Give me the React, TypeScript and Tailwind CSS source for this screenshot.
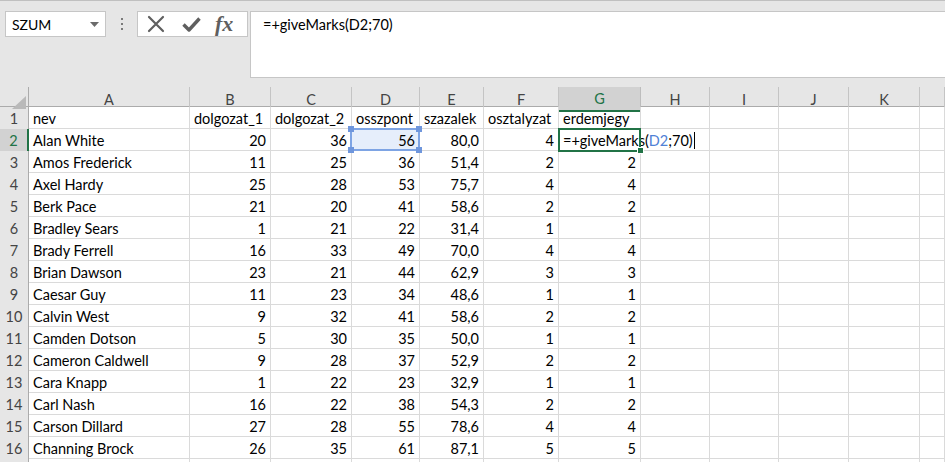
import React from 'react';

const cols = ['A', 'B', 'C', 'D', 'E', 'F', 'G', 'H', 'I', 'J', 'K', ''];

const data: (string | number)[][] = [
  ['nev', 'dolgozat_1', 'dolgozat_2', 'osszpont', 'szazalek', 'osztalyzat', 'erdemjegy'],
  ['Alan White', 20, 36, 56, '80,0', 4, ''],
  ['Amos Frederick', 11, 25, 36, '51,4', 2, 2],
  ['Axel Hardy', 25, 28, 53, '75,7', 4, 4],
  ['Berk Pace', 21, 20, 41, '58,6', 2, 2],
  ['Bradley Sears', 1, 21, 22, '31,4', 1, 1],
  ['Brady Ferrell', 16, 33, 49, '70,0', 4, 4],
  ['Brian Dawson', 23, 21, 44, '62,9', 3, 3],
  ['Caesar Guy', 11, 23, 34, '48,6', 1, 1],
  ['Calvin West', 9, 32, 41, '58,6', 2, 2],
  ['Camden Dotson', 5, 30, 35, '50,0', 1, 1],
  ['Cameron Caldwell', 9, 28, 37, '52,9', 2, 2],
  ['Cara Knapp', 1, 22, 23, '32,9', 1, 1],
  ['Carl Nash', 16, 22, 38, '54,3', 2, 2],
  ['Carson Dillard', 27, 28, 55, '78,6', 4, 4],
  ['Channing Brock', 26, 35, 61, '87,1', 5, 5],
  ['', '', '', '', '', '', ''],
];

const gridCols =
  'grid grid-cols-[29px_161px_81px_81px_68px_64px_75px_82px_69px_69px_70px_71px_1fr]';

function FormulaCell() {
  return (
    <div className="relative z-10 h-[22px] border-b border-[#dadada] pl-[4px] whitespace-nowrap leading-[23px]">
      <span>=+giveMarks(</span>
      <span className="text-[#4f81d6]">D2</span>
      <span>;70)</span>
      <span className="ml-[1px] inline-block h-[17px] w-px translate-y-[3px] bg-black" />
      {/* active cell frame */}
      <div className="pointer-events-none absolute -top-[1px] -left-[1px] h-[24px] w-[83px] border-2 border-[#217346]" />
      <div className="absolute -right-[3px] -bottom-[4px] h-[7px] w-[7px] border border-white bg-[#217346]" />
    </div>
  );
}

function RefCell({ value }: { value: number }) {
  return (
    <div className="relative h-[22px] border-r border-b border-[#dadada] bg-[#e6eefb] pr-[4px] text-right leading-[23px]">
      {value}
      <div className="pointer-events-none absolute -top-[1px] -left-[2px] h-[23px] w-[70px] border-2 border-[#7ea4e4]" />
      <div className="absolute -top-[3px] -left-[4px] h-[6px] w-[6px] bg-[#6f96dc]" />
      <div className="absolute -top-[3px] -right-[3px] h-[6px] w-[6px] bg-[#6f96dc]" />
      <div className="absolute -bottom-[3px] -left-[4px] h-[6px] w-[6px] bg-[#6f96dc]" />
      <div className="absolute -right-[3px] -bottom-[3px] h-[6px] w-[6px] bg-[#6f96dc]" />
    </div>
  );
}

export default function App() {
  return (
    <div className="h-[462px] w-[945px] overflow-hidden bg-[#e6e6e6] font-[Lato,sans-serif] text-[14.5px] text-black">
      {/* Formula bar area */}
      <div className="flex h-[77px] items-start border-t border-[#c0c0c0] pt-[10px]">
        <div className="ml-[5px] flex h-[26px] w-[101px] items-center justify-between border border-[#c6c6c6] bg-white pr-[6px] pl-[6px] text-[14px]">
          <span>SZUM</span>
          <svg width="9" height="5" viewBox="0 0 9 5">
            <path d="M0 0h9L4.5 5z" fill="#6b6b6b" />
          </svg>
        </div>
        <div className="ml-[14px] flex h-[26px] w-[4px] flex-col items-center justify-center gap-[3px]">
          <div className="h-[2px] w-[2px] bg-[#7a7a7a]" />
          <div className="h-[2px] w-[2px] bg-[#7a7a7a]" />
          <div className="h-[2px] w-[2px] bg-[#7a7a7a]" />
        </div>
        <div className="ml-[13px] flex h-[26px] w-[111px] items-center border border-[#c6c6c6] bg-white">
          <svg className="ml-[9px]" width="18" height="18" viewBox="0 0 18 18">
            <path d="M2 2L16 16M16 2L2 16" stroke="#5f5f5f" strokeWidth="2.2" strokeLinecap="round" />
          </svg>
          <svg className="ml-[17px]" width="19" height="16" viewBox="0 0 19 16">
            <path d="M1.5 8.5L7 14L17.5 2.5" stroke="#5f5f5f" strokeWidth="3.4" fill="none" strokeLinejoin="round" />
          </svg>
          <span className="ml-[14px] font-['Liberation_Serif',serif] text-[22px] leading-none font-semibold text-[#5f5f5f] italic">
            fx
          </span>
        </div>
        <div className="ml-[2px] h-[67px] flex-1 border-t border-b border-l border-[#c6c6c6] bg-white pt-[2px] pl-[12px] text-[14.5px]">
          =+giveMarks(D2;70)
        </div>
      </div>

      {/* Column header band */}
      <div className="h-[10px]" />
      <div className={`${gridCols} h-[20px] border-b border-[#ababab] text-[#444]`}>
        <div className="relative border-r border-[#ababab]">
          <svg className="absolute right-[2px] bottom-[2px]" width="14" height="13" viewBox="0 0 14 13">
            <path d="M14 0V13H0z" fill="#b9b9b9" />
          </svg>
        </div>
        {cols.map((c, i) =>
          c === 'G' ? (
            <div
              key={i}
              className="-mb-[1px] flex items-center justify-center border-r border-b-2 border-r-[#bdbdbd] border-b-[#217346] bg-[#d2d2d2] pt-[1px] text-[#217346]"
            >
              {c}
            </div>
          ) : (
            <div key={i} className="flex items-center justify-center border-r border-[#c4c4c4] pt-[1px]">
              {c}
            </div>
          ),
        )}
      </div>

      {/* Cells */}
      <div className="bg-white">
        {data.map((row, ri) => {
          const r = ri + 1;
          const label = r < 17 ? r : '';
          return (
            <div key={r} className={`${gridCols} h-[22px]`}>
              {r === 2 ? (
                <div className="flex items-center justify-center border-r-2 border-b border-r-[#217346] border-b-[#c6c6c6] bg-[#d2d2d2] pt-[1px] text-[#217346]">
                  {label}
                </div>
              ) : (
                <div className="flex items-center justify-center border-r border-b border-r-[#ababab] border-b-[#c6c6c6] bg-[#e6e6e6] pt-[1px] text-[#444]">
                  {label}
                </div>
              )}
              {cols.map((_, ci) => {
                const v = ci < 7 ? row[ci] : '';
                if (r === 2 && ci === 6) return <FormulaCell key={ci} />;
                if (r === 2 && ci === 3) return <RefCell key={ci} value={v as number} />;
                const right = r > 1 && ci > 0 && ci < 7;
                return (
                  <div
                    key={ci}
                    className={`h-[22px] overflow-hidden border-r border-b border-[#dadada] leading-[23px] whitespace-nowrap ${
                      right ? 'pr-[4px] text-right' : 'pl-[4px]'
                    }`}
                  >
                    {v}
                  </div>
                );
              })}
            </div>
          );
        })}
      </div>
    </div>
  );
}
